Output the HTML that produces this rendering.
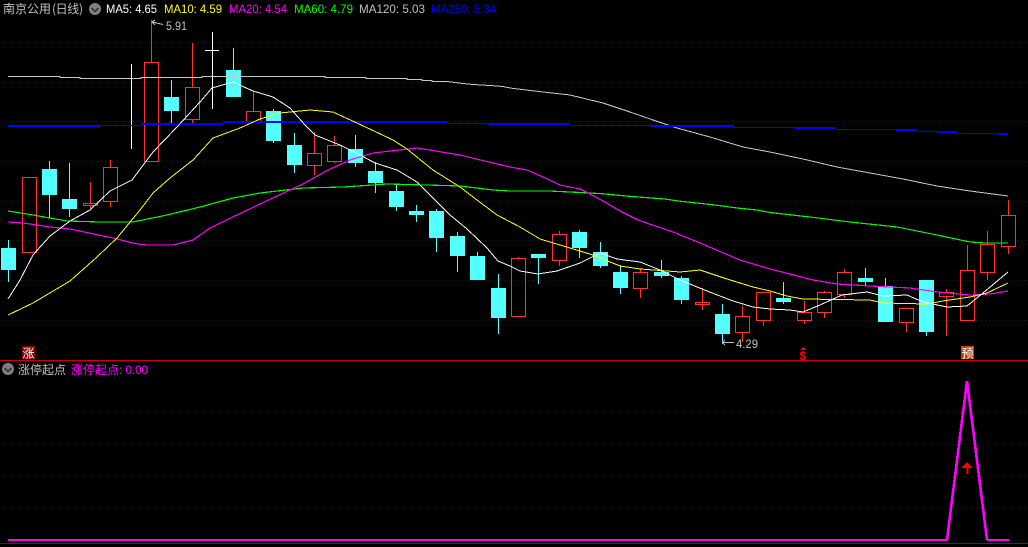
<!DOCTYPE html>
<html><head><meta charset="utf-8"><title>南京公用</title>
<style>
html,body{margin:0;padding:0;background:#000;width:1028px;height:547px;overflow:hidden}
svg{display:block}
text{font-family:"Liberation Sans","WenQuanYi Zen Hei","Noto Sans CJK SC",sans-serif;font-size:12px}
.c{font-family:"WenQuanYi Zen Hei","Noto Sans CJK SC","Liberation Sans",sans-serif}
</style></head><body>
<svg width="1028" height="547" viewBox="0 0 1028 547" xmlns="http://www.w3.org/2000/svg">
<rect width="1028" height="547" fill="#000"/>
<g shape-rendering="crispEdges">
<g stroke="#800000" stroke-width="1" stroke-dasharray="1 3" fill="none">
<path d="M1 42.5H1028M1 82.5H1028M1 121.5H1028M1 161.5H1028M1 201.5H1028M1 240.5H1028M1 280.5H1028M1 320.5H1028M1 412.5H1028M1 444.5H1028M1 476.5H1028M1 508.5H1028"/>
</g>
<path d="M0 360.5H1028" stroke="#cc0000" fill="none"/>
<path d="M0 543.5H1028" stroke="#a00000" fill="none"/>
<path fill="#54ffff" d="M1 248h15v22h-15zM8 240h1v42h-1zM42 169h15v26h-15zM49 161h1v57h-1zM62 199h15v10h-15zM69 163h1v54h-1zM164 97h15v14h-15zM171 80h1v44h-1zM226 70h15v27h-15zM233 48h1v49h-1zM266 111h15v30h-15zM273 109h1v34h-1zM287 145h15v20h-15zM294 133h1v40h-1zM348 149h15v14h-15zM355 135h1v32h-1zM368 171h15v12h-15zM375 162h1v31h-1zM389 191h15v16h-15zM396 185h1v26h-1zM409 211h15v4h-15zM416 205h1v17h-1zM429 211h15v27h-15zM436 209h1v43h-1zM450 236h15v20h-15zM457 232h1v40h-1zM470 256h15v24h-15zM477 252h1v28h-1zM491 288h15v30h-15zM498 274h1v60h-1zM531 254h15v4h-15zM538 258h1v26h-1zM572 232h15v16h-15zM579 230h1v28h-1zM593 252h15v14h-15zM600 242h1v26h-1zM613 272h15v16h-15zM620 265h1v29h-1zM654 272h15v4h-15zM661 260h1v18h-1zM674 278h15v22h-15zM681 276h1v28h-1zM715 314h15v20h-15zM722 304h1v40h-1zM776 298h15v4h-15zM783 282h1v22h-1zM858 278h15v4h-15zM865 268h1v17h-1zM878 286h15v36h-15zM885 278h1v8h-1zM919 280h15v52h-15zM926 332h1v4h-1z"/>
<path fill="none" stroke="#ff3232" stroke-width="1" d="M22.5 177.5h14v75h-14zM83.5 203.5h14v2h-14zM90.5 182v21M90.5 206v3M103.5 167.5h14v34h-14zM110.5 160v7M110.5 202v5M144.5 62.5h14v99h-14zM151.5 20v42M185.5 87.5h14v32h-14zM192.5 43v44M192.5 120v5M246.5 111.5h14v10h-14zM253.5 91v20M307.5 153.5h14v12h-14zM314.5 132v21M314.5 166v9M327.5 145.5h14v16h-14zM334.5 136v9M334.5 162v1M511.5 258.5h14v58h-14zM518.5 257v1M552.5 234.5h14v26h-14zM559.5 231v3M559.5 261v5M633.5 272.5h14v16h-14zM640.5 268v4M640.5 289v9M695.5 302.5h14v2h-14zM702.5 288v14M702.5 305v5M735.5 316.5h14v16h-14zM742.5 306v10M742.5 333v9M756.5 292.5h14v28h-14zM763.5 321v5M797.5 312.5h14v8h-14zM804.5 301v11M804.5 321v3M817.5 292.5h14v20h-14zM824.5 291v1M824.5 313v5M837.5 272.5h14v22h-14zM844.5 269v3M844.5 295v3M899.5 308.5h14v14h-14zM906.5 323v9M939.5 292.5h14v4h-14zM946.5 289v3M946.5 297v39M960.5 270.5h14v50h-14zM967.5 245v25M980.5 244.5h14v28h-14zM987.5 231v13M987.5 273v7M1001.5 215.5h14v31h-14zM1008.5 200v15M1008.5 247v7"/>
<path fill="none" stroke="#fff" d="M131.5 64V149M212.5 32V109M205 50.5H219"/>
<!-- MA120 -->
<polyline fill="none" stroke="#c8c8c8" stroke-width="1" points="8,76.5 60,76.5 60,77.5 80,77.5 80,78.5 141,78.5 141,77.5 202,77.5 202,76.5 325,76.5 325,77.5 366,77.5 366,78.5 407,78.5 407,79.5 422,79.5 422,80.5 432,80.5 432,81.5 447,81.5 463,83.5 473,84.5 490,85.5 503,86.5 510,88 543,92 570,95 603,103 630,112 653,120 677,128 710,137 743,147 770,152 803,159 837,167 870,173 903,179 937,186 970,191 1008,196"/>
<!-- MA250 -->
<path fill="#0000ff" d="M8 125h92v2h-92zM100 125h41v1h-41zM141 123h82v2h-82zM223 121h224v2h-224zM447 123h41v1h-41zM488 123h82v2h-82zM570 125h81v1h-81zM651 125h82v2h-82zM733 127h61v1h-61zM794 127h41v2h-41zM835 129h61v1h-61zM896 129h21v2h-21zM917 131h20v1h-20zM937 131h20v2h-20zM957 133h41v1h-41zM998 133h10v2h-10z"/>
<!-- MA60 -->
<polyline fill="none" stroke="#00ff00" stroke-width="1.15" points="8,211 33,215 67,221 100,222 133,222 167,215 200,207 233,198 260,193 303,188 343,187 387,184 427,185 460,186 493,190 510,191 549,191 570,192 590,193 606,194 626,196 651,198 665,199 678,201 697,203 715,205 737,208 757,210 770,212.5 810,217 850,222 897,227 937,235 970,242 985,243 1008,243"/>
<!-- MA20 -->
<polyline fill="none" stroke="#ff00ff" stroke-width="1.15" points="8,222 23,223 50,227 70,229 113,238 137,244 147,245 173,245 193,240 210,228 260,204 290,190 303,184 328,170 350,160 373,153 417,148 460,155 493,163 510,167 527,170 543,177 560,185 580,189 590,194 603,201 620,211 638,220 673,232 700,243 740,260 770,269 813,280 837,284 870,286 910,288 937,292 970,295 990,294 1008,291"/>
<!-- MA10 -->
<polyline fill="none" stroke="#ffff00" stroke-width="1" points="8,315 33,303 70,281 97,257 117,238 140,210 153,193 170,178 193,160 213,138 240,128 260,119 280,113 310,110 333,112 357,123 393,140 407,149 433,170 460,187 477,200 497,215 520,227 540,239 570,248 593,255 620,266 640,269 667,271 680,272 700,270 727,279 753,287 770,291 787,296 803,299 870,300 883,303 927,304 943,301 970,297 987,293 1008,283"/>
<!-- MA5 -->
<polyline fill="none" stroke="#ffffff" stroke-width="1" points="8,299 20,280 33,255 50,236 70,221 90,210 110,191 132,180 153,152 177,127 200,102 212,88 233,82 253,91 273,97 290,108 305,125 315,135 340,145 360,155 375,163 397,170 417,182 437,202 450,215 467,229 487,248 498,261 510,266 520,271 538,274 557,271 580,263 600,253 617,259 640,262 660,270 680,280 707,291 733,301 753,307 770,309 790,310 803,312 820,305 842,295 867,292 883,296 907,295 923,302 947,307 967,306 983,293 1008,272"/>
<!-- pointers -->
<path fill="none" stroke="#c0c0c0" d="M152 22L163 24.5M152 22L155 20M152 22L155 25M722 342.5H734M722 342.5L725 340M722 342.5L725 345"/>
<!-- lower indicator -->
<path fill="none" stroke="#ff00ff" stroke-width="2" d="M8 540H947M987 540H1009"/>
<polyline fill="none" stroke="#ff00ff" stroke-width="2.6" stroke-linejoin="miter" points="947,540 967,381 987,540"/>
<path fill="#ff0000" d="M967 462L972.5 468H968.5V474H966.5V468H961.5Z"/>
<rect x="22" y="346" width="13" height="13" fill="#8b0000"/>
<rect x="961" y="346" width="13" height="13" fill="#b8440e"/>
<path fill="#ff0000" d="M803 347L806 350H800Z"/>
</g>
<text x="799.500" y="360" fill="#ff0000" style="font-size:12px;font-weight:bold">$</text>
<text class="c" x="22.500" y="357.500" fill="#ffffff" style="font-size:12px">涨</text>
<text class="c" x="961.500" y="357.500" fill="#ffffff" style="font-size:12px">预</text>
<text class="c" x="3" y="13" fill="#c0c0c0">南京公用</text>
<text class="c" x="52" y="13" fill="#c0c0c0" textLength="31">(日线)</text>
<circle cx="95" cy="9" r="6" fill="#808080"/>
<path d="M91.500 8L95 11.500L98.500 8" fill="none" stroke="#2a2a2a" stroke-width="1.500"/>
<text x="106" y="13" fill="#ffffff" textLength="51" lengthAdjust="spacingAndGlyphs">MA5: 4.65</text>
<text x="164" y="13" fill="#ffff00" textLength="58" lengthAdjust="spacingAndGlyphs">MA10: 4.59</text>
<text x="229" y="13" fill="#ff00ff" textLength="58" lengthAdjust="spacingAndGlyphs">MA20: 4.54</text>
<text x="294" y="13" fill="#00ff00" textLength="59" lengthAdjust="spacingAndGlyphs">MA60: 4.79</text>
<text x="359" y="13" fill="#c0c0c0" textLength="66" lengthAdjust="spacingAndGlyphs">MA120: 5.03</text>
<text x="431" y="13" fill="#0000ff" textLength="65" lengthAdjust="spacingAndGlyphs">MA250: 5.34</text>
<text x="166" y="30" fill="#c0c0c0" textLength="21" lengthAdjust="spacingAndGlyphs">5.91</text>
<text x="736" y="348" fill="#c0c0c0" textLength="22" lengthAdjust="spacingAndGlyphs">4.29</text>
<circle cx="8" cy="369" r="6" fill="#808080"/>
<path d="M4.500 368L8 371.500L11.500 368" fill="none" stroke="#2a2a2a" stroke-width="1.500"/>
<text class="c" x="18" y="374" fill="#c0c0c0">涨停起点</text>
<text class="c" x="71" y="374" fill="#ff00ff">涨停起点</text>
<text x="119" y="374" fill="#ff00ff" textLength="29" lengthAdjust="spacingAndGlyphs">: 0.00</text>
</svg>
</body></html>
